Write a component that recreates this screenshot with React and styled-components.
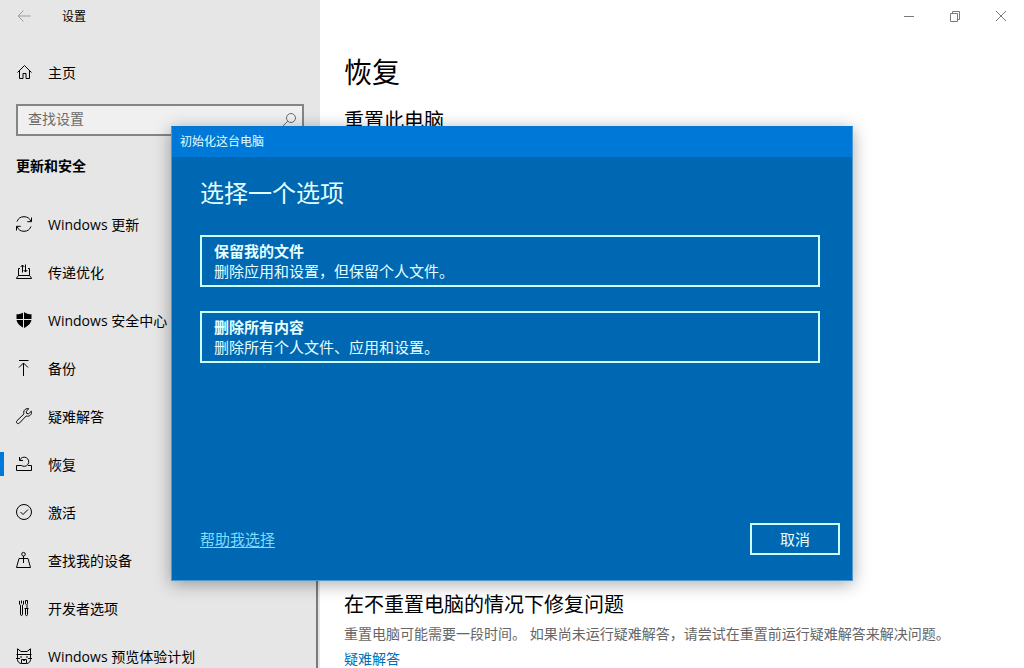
import React from 'react';
import styled, { createGlobalStyle } from 'styled-components';

const GlobalStyle = createGlobalStyle`
  *, *::before, *::after { box-sizing: border-box; }
  html, body, #root { height: 100%; }
  body {
    margin: 0;
    overflow: hidden;
    background: #ffffff;
    color: #000000;
    font: 14px/20px 'Open Sans', 'Noto Sans CJK SC', sans-serif;
  }
  h1, h2, h3, p, ul { margin: 0; padding: 0; font-weight: 400; }
  button, input { font: inherit; color: inherit; border-radius: 0; }
`;

const Window = styled.div`
  position: relative;
  display: flex;
  height: 100vh;
  overflow: hidden;
`;

const Sidebar = styled.aside`
  position: relative;
  flex: 0 0 320px;
  background: #e6e6e6;
`;

const ScrollThumb = styled.span`
  position: absolute;
  right: 2px;
  top: 200px;
  bottom: 0;
  width: 2px;
  background: #7a7a7a;
`;

const AppHeader = styled.header`
  display: flex;
  align-items: center;
  gap: 30px;
  height: 32px;
  padding-left: 16px;
  font-size: 12px;
`;

const IconButton = styled.button`
  display: grid;
  place-items: center;
  width: 16px;
  height: 16px;
  padding: 0;
  border: 0;
  background: transparent;
  color: ${(p) => p.$color || '#000000'};
`;

const Icon = styled.svg`
  display: block;
  flex: none;
  width: 16px;
  height: 16px;
  fill: none;
  stroke: currentColor;
  stroke-width: 1;
  overflow: visible;
`;

const Label = styled.span`
  padding-top: 2px;
`;

const NavLink = styled.a`
  position: relative;
  display: flex;
  align-items: center;
  gap: 16px;
  height: 48px;
  padding-left: 16px;
  color: #000000;
  text-decoration: none;
  white-space: nowrap;

  &[aria-current='page']::before {
    content: '';
    position: absolute;
    left: 0;
    top: 12px;
    width: 4px;
    height: 24px;
    background: #0078d7;
  }
`;

const HomeRow = styled.div`
  padding-top: 16px;
`;

const SearchBox = styled.label`
  display: flex;
  align-items: center;
  height: 32px;
  margin: 8px 16px 0;
  padding: 0 4px 0 10px;
  border: 2px solid #858585;
  background: #f0f0f0;
  color: #6b6b6b;
`;

const SearchInput = styled.input`
  flex: 1;
  min-width: 0;
  padding: 0 0 2px;
  border: 0;
  outline: 0;
  background: transparent;
  &::placeholder { color: #6b6b6b; opacity: 1; }
`;

const Category = styled.h2`
  padding: 20px 16px 24px;
  font-size: 14px;
  line-height: 20px;
  font-weight: 700;
`;

const NavList = styled.ul`
  list-style: none;
`;

const Main = styled.main`
  flex: 1;
  min-width: 0;
`;

const WindowControls = styled.div`
  display: flex;
  justify-content: flex-end;
  align-items: center;
  gap: 30px;
  height: 32px;
  padding-right: 15px;
`;

const Content = styled.div`
  display: flex;
  flex-direction: column;
  padding: 20px 24px 0;
`;

const PageTitle = styled.h1`
  font-size: 28px;
  line-height: 40px;
`;

const SectionTitle = styled.h2`
  margin-top: ${(p) => p.$top || 0}px;
  font-size: 20px;
  line-height: 28px;
`;

const Note = styled.p`
  margin-top: 5px;
  color: #666666;
`;

const TextLink = styled.a`
  align-self: flex-start;
  margin-top: 5px;
  color: #0070b8;
  text-decoration: none;
`;

const Dialog = styled.section`
  position: absolute;
  left: 171px;
  right: 171px;
  top: 126px;
  display: flex;
  flex-direction: column;
  height: 455px;
  border: 1px solid #4f9ad6;
  border-top-color: #0078d7;
  background: #0067b3;
  color: #e4ffff;
  font-size: 15px;
  box-shadow: 0 3px 16px rgba(0, 0, 0, 0.34);
`;

const DialogBar = styled.header`
  padding: 5px 8px;
  background: #0078d7;
  font-size: 12px;
`;

const DialogBody = styled.div`
  flex: 1;
  display: flex;
  flex-direction: column;
  gap: 24px;
  padding: 20px 32px 0 28px;
`;

const DialogTitle = styled.h2`
  margin-bottom: 2px;
  font-size: 24px;
  line-height: 32px;
`;

const Option = styled.button`
  display: flex;
  flex-direction: column;
  align-items: flex-start;
  height: 52px;
  padding: 4px 12px;
  border: 2px solid #ccffff;
  background: transparent;
  line-height: 20px;
  text-align: left;
`;

const DialogFooter = styled.footer`
  display: flex;
  justify-content: space-between;
  align-items: center;
  padding: 0 12px 25px 28px;
`;

const HelpLink = styled.a`
  color: #7fdcff;
  text-decoration: underline;
  text-underline-offset: 2px;
`;

const CancelButton = styled.button`
  width: 90px;
  height: 32px;
  padding: 0;
  border: 2px solid #ccffff;
  background: transparent;
`;

const icons = {
  back: <path d="M2 8h12.500M7.500 2.500 2 8l5.500 5.500" />,
  home: <path d="M1.500 8.500 8.500 1.500l7 7M3.500 7v7.500h3.500v-5h3v5h3.500V7" />,
  search: <><circle cx="9" cy="6" r="4.500" /><path d="M5.800 9.200 1 14" /></>,
  update: <path d="M1 5.500A7.500 7.500 0 0 1 15 5.500M15.500 1.500v4.200h-4.200M15 10.500A7.500 7.500 0 0 1 1 10.500M.5 14.500v-4.200h4.200" />,
  delivery: <path d="M4 4.500H2.500v7L.5 14v.500h15V14l-2-2.500v-7H12M2.500 11.500h11M6.500 8.500V1M4.700 3l1.800-2 1.800 2M9.500 .5V8M7.700 6l1.800 2 1.800-2" />,
  shield: <><path d="M8 0c2 1.600 4.800 2.300 7.500 2.300V7c0 4-3.200 7-7.500 9C3.700 14 .5 11 .5 7V2.300C3.200 2.300 6 1.600 8 0z" fill="currentColor" stroke="none" /><path d="M7.500 0v16M0 7.500h16" stroke="#e6e6e6" /></>,
  backup: <path d="M3 .5h9.500M7.500 16V3M3 7.500 7.500 3 12 7.500" />,
  wrench: <path d="M15.300 3.200 12.600 5.800l-2-.400-.400-2L12.800.8C10.500 0 7.800 1.700 7.700 4.200c0 .700.100 1.200.300 1.700L1 12.700c-1.600 1.700.700 4 2.400 2.400L10.200 8c3 1 6.200-1.500 5.100-4.800z" />,
  recovery: <path d="M5 9.500H.5v5h15v-5H12M3.500 1v3.500H7M3.900 4A4.600 4.600 0 1 1 5.200 9.300" />,
  activate: <><circle cx="8" cy="8" r="7.500" /><path d="m4.500 8 2.500 2.500 5-5" /></>,
  find: <><circle cx="7.500" cy="2.200" r="1.800" /><path d="M5 6.500H3L.5 15.500h14L12 6.500h-2M4.500 6.500h6M7.500 4v7" /></>,
  dev: <path d="M3.500 .8v3.400l1 1v9c0 1.700 2 1.700 2 0v-9l1-1V.8M5.500 .5v3M9.500 .5h2v3l-.5 1v4M9.500 .5v3l.5 1M8.500 8.500h4M9.500 8.500v6c0 1.500 2 1.500 2 0v-6" />,
  insider: <path d="M1.500 6V.800L5 3.500h6L14.500.800V6M.5 6.500h15M1.500 6.500v5c0 2 1.500 4 4 4h5c2.500 0 4-2 4-4v-5M0 10.500h4M12 10.500h4M5 8v2M11 8v2M5.500 15v-3.500h5V15M7 11.500l1 1.500 1-1.500" />,
  minimize: <path d="M3 8.500h10" />,
  restore: <path d="M3.500 5.500h7v8h-7zM5.500 5.500v-2h7v8h-2" />,
  close: <path d="m3 3 10 10M13 3 3 13" />,
};

const Glyph = ({ name }) => (
  <Icon viewBox="0 0 16 16" aria-hidden="true">{icons[name]}</Icon>
);

const navItems = [
  ['update', 'Windows 更新'],
  ['delivery', '传递优化'],
  ['shield', 'Windows 安全中心'],
  ['backup', '备份'],
  ['wrench', '疑难解答'],
  ['recovery', '恢复'],
  ['activate', '激活'],
  ['find', '查找我的设备'],
  ['dev', '开发者选项'],
  ['insider', 'Windows 预览体验计划'],
];

export default function App() {
  return (
    <>
      <GlobalStyle />
      <Window lang="zh-CN">
        <Sidebar>
          <AppHeader>
            <IconButton aria-label="返回" $color="#9a9a9a"><Glyph name="back" /></IconButton>
            <Label>设置</Label>
          </AppHeader>
          <HomeRow>
            <NavLink href="#home"><Glyph name="home" /><Label>主页</Label></NavLink>
          </HomeRow>
          <SearchBox>
            <SearchInput type="text" placeholder="查找设置" aria-label="查找设置" />
            <Glyph name="search" />
          </SearchBox>
          <Category>更新和安全</Category>
          <NavList>
            {navItems.map(([icon, label]) => (
              <li key={icon}>
                <NavLink href={`#${icon}`} aria-current={icon === 'recovery' ? 'page' : undefined}>
                  <Glyph name={icon} />
                  <Label>{label}</Label>
                </NavLink>
              </li>
            ))}
          </NavList>
          <ScrollThumb />
        </Sidebar>
        <Main>
          <WindowControls>
            {[['minimize', '最小化'], ['restore', '还原'], ['close', '关闭']].map(([icon, label]) => (
              <IconButton key={icon} aria-label={label} $color="#7a7a7a"><Glyph name={icon} /></IconButton>
            ))}
          </WindowControls>
          <Content>
            <PageTitle>恢复</PageTitle>
            <SectionTitle $top={15}>重置此电脑</SectionTitle>
            <SectionTitle $top={456}>在不重置电脑的情况下修复问题</SectionTitle>
            <Note>重置电脑可能需要一段时间。 如果尚未运行疑难解答，请尝试在重置前运行疑难解答来解决问题。</Note>
            <TextLink href="#troubleshoot">疑难解答</TextLink>
          </Content>
        </Main>
        <Dialog role="dialog" aria-labelledby="dialog-title">
          <DialogBar>初始化这台电脑</DialogBar>
          <DialogBody>
            <DialogTitle id="dialog-title">选择一个选项</DialogTitle>
            <Option>
              <strong>保留我的文件</strong>
              <span>删除应用和设置，但保留个人文件。</span>
            </Option>
            <Option>
              <strong>删除所有内容</strong>
              <span>删除所有个人文件、应用和设置。</span>
            </Option>
          </DialogBody>
          <DialogFooter>
            <HelpLink href="#help">帮助我选择</HelpLink>
            <CancelButton>取消</CancelButton>
          </DialogFooter>
        </Dialog>
      </Window>
    </>
  );
}
